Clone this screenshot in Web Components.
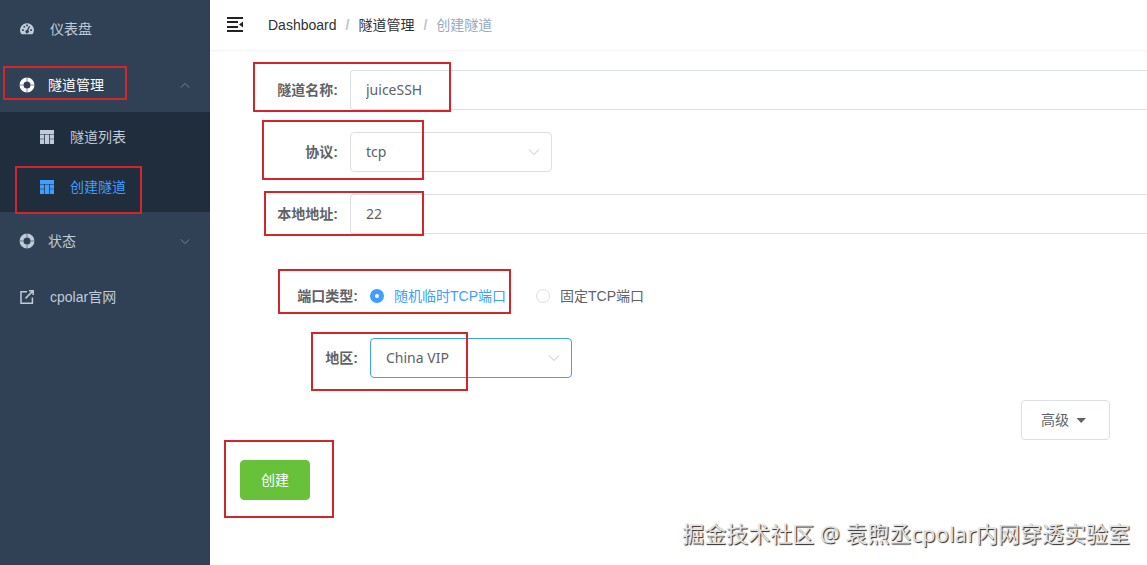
<!DOCTYPE html>
<html lang="zh-CN">
<head>
<meta charset="utf-8">
<title>创建隧道</title>
<style>
  body {
    margin: 0;
    background: #fff;
    color: #606266;
    font: 14px/20px "Liberation Sans", "Noto Sans CJK SC", sans-serif;
  }
</style>
</head>
<body>
<app-layout>
  <side-menu slot="side">
    <menu-item icon="gauge">仪表盘</menu-item>
    <menu-item icon="ring" arrow="up" current>隧道管理
      <mark-frame slot="mark" style="--top:10px;--left:3px;--width:124px;--height:34px"></mark-frame>
    </menu-item>
    <sub-menu>
      <menu-item icon="grid" nested>隧道列表</menu-item>
      <menu-item icon="grid" nested active>创建隧道
        <mark-frame slot="mark" style="--top:4px;--left:15px;--width:127px;--height:48px"></mark-frame>
      </menu-item>
    </sub-menu>
    <menu-item icon="ring" arrow="down">状态</menu-item>
    <menu-item icon="link">cpolar官网</menu-item>
  </side-menu>
  <nav-bar slot="top"></nav-bar>
  <tunnel-form>
    <text-field label="隧道名称:" value="juiceSSH">
      <mark-frame style="--top:-8px;--left:23px;--width:198px;--height:50px"></mark-frame>
    </text-field>
    <select-field label="协议:" options="tcp,http,tls">
      <mark-frame style="--top:-12px;--left:32px;--width:162px;--height:60px"></mark-frame>
    </select-field>
    <text-field label="本地地址:" value="22">
      <mark-frame style="--top:-3px;--left:34px;--width:160px;--height:45px"></mark-frame>
    </text-field>
    <field-group>
      <radio-field label="端口类型:" options="随机临时TCP端口,固定TCP端口">
        <mark-frame style="--top:-7px;--left:28px;--width:233px;--height:45px"></mark-frame>
      </radio-field>
      <select-field label="地区:" options="China VIP,China,United States" focused>
        <mark-frame style="--top:-6px;--left:61px;--width:157px;--height:59px"></mark-frame>
      </select-field>
    </field-group>
    <action-button slot="more" kind="plain" caret>高级</action-button>
    <action-button slot="submit" kind="success">创建
      <mark-frame slot="mark" style="--top:-20px;--left:-16px;--width:110px;--height:78px"></mark-frame>
    </action-button>
  </tunnel-form>
  <water-mark slot="overlay">掘金技术社区 @ 袁煦丞cpolar内网穿透实验室</water-mark>
</app-layout>

<script>
const define = (name, render) =>
  customElements.define(name, class extends HTMLElement {
    connectedCallback() {
      if (this.shadowRoot) return;
      this.attachShadow({ mode: 'open' }).innerHTML = render(this);
    }
  });

const icons = {
  gauge: `<svg viewBox="0 0 14 14"><path fill="currentColor" fill-rule="evenodd" d="M7 1.2a7 7 0 0 0-5.9 10.6c.2.3.4.4.7.4h10.4c.3 0 .5-.1.7-.4A7 7 0 0 0 7 1.2zM2.1 7.2h1.7v1.7H2.1zM3.5 4h1.6v1.6H3.5zM6.2 2.6h1.6v1.7H6.2zM10.2 7.2h1.7v1.7h-1.7zM9 3.9l1.1.5-1.8 3.9a1.7 1.7 0 1 1-1.4-.4z"/></svg>`,
  ring: `<svg viewBox="0 0 14 14"><circle cx="7" cy="7" r="5.5" fill="none" stroke="currentColor" stroke-width="4"/><path d="M7-1v4.5M7 10.5V15M-1 7h4.5M10.5 7H15" stroke="#304156" stroke-width="1" stroke-opacity=".6"/></svg>`,
  grid: `<svg viewBox="0 0 14 14"><path fill="currentColor" d="M0 0h14v4H0zM0 4.6h4.3v4.1H0zM5 4.6h4v9.4H5zM9.7 4.6H14v4.1H9.7zM0 9.3h4.3V14H0zM9.7 9.3H14V14H9.7z"/></svg>`,
  link: `<svg viewBox="0 0 14 14" fill="none" stroke="currentColor" stroke-width="1.5"><path d="M7 1.7H1v11.5h11.4V7.6M5.5 8.4l7-7M9 .8h4.2V5"/></svg>`
};
const chevron = `<svg class="chevron" viewBox="0 0 12 8" width="12" height="8" fill="none" stroke="currentColor"><path d="M1 1.5l5 5 5-5"/></svg>`;

define('app-layout', () => `<style>
  :host { display: flex; position: relative; min-height: 100vh; overflow: hidden; }
  aside { flex: 0 0 210px; background: #304156; }
  .page { flex: 1; min-width: 0; }
</style>
<aside><slot name="side"></slot></aside>
<div class="page"><slot name="top"></slot><main><slot></slot></main></div>
<slot name="overlay"></slot>`);

define('side-menu', () => `<style>
  :host { display: block; color: #bfcbd9; }
</style><nav><slot></slot></nav>`);

define('sub-menu', () => `<style>
  :host { display: block; background: #1f2d3d; }
</style><slot></slot>`);

define('menu-item', el => `<style>
  :host { display: block; position: relative; }
  :host([current]) { color: #fff; }
  :host([active]) { color: #409eff; }
  a { display: flex; align-items: center; gap: 16px; height: 56px; padding: 2px 20px 0;
      box-sizing: border-box; color: inherit; text-decoration: none; }
  :host([nested]) a { height: 50px; padding: 0 20px 0 40px; }
  :host([icon="ring"]) a { gap: 14px; }
  .icon { width: 14px; height: 14px; }
  .icon svg { display: block; width: 100%; height: 100%; overflow: visible; }
  .text { flex: 1; }
  .chevron { width: 10px; height: 7px; color: #8391a3; }
  :host([arrow="up"]) .chevron { transform: rotate(180deg); }
</style>
<a href="#"><span class="icon">${icons[el.getAttribute('icon')]}</span>
<span class="text"><slot></slot></span>${el.hasAttribute('arrow') ? chevron : ''}</a><slot name="mark"></slot>`);

define('mark-frame', () => `<style>
  :host { position: absolute; top: var(--top); left: var(--left); width: var(--width); height: var(--height);
          box-sizing: border-box; border: 2px solid #d2262c; pointer-events: none; z-index: 1; }
</style>`);

define('nav-bar', () => `<style>
  :host { display: flex; align-items: center; height: 50px; box-shadow: 0 1px 2px rgba(0,21,41,.06); }
  button { display: flex; margin: 0; padding: 0 17px; border: 0; background: none; color: #222; }
  ol { display: flex; margin: 0 8px; padding: 0; list-style: none; }
  li + li::before { content: "/"; margin: 0 9px; color: #c0c4cc; font-weight: 700; }
  a { color: #303133; text-decoration: none; }
  [aria-current] { color: #97a8be; }
</style>
<button type="button" aria-label="折叠菜单"><svg width="16" height="16" viewBox="0 0 16 16" fill="currentColor"><path d="M0 0h16v2H0zM0 4h11v2H0zM0 9h11v2H0zM0 13h16v2H0zM16 4.5v6l-4-3z"/></svg></button>
<nav aria-label="路径"><ol><li><a href="#">Dashboard</a></li><li><a href="#">隧道管理</a></li><li><span aria-current="page">创建隧道</span></li></ol></nav>`);

define('tunnel-form', () => `<style>
  :host { display: block; padding: 20px 0 20px 20px; }
  .fields { display: grid; gap: 22px; }
  .more { display: flex; justify-content: flex-end; margin: 22px 37px 20px 0; }
  .submit { display: flex; padding-left: 10px; }
</style>
<form><div class="fields"><slot></slot></div>
<div class="more"><slot name="more"></slot></div>
<div class="submit"><slot name="submit"></slot></div></form>`);

define('field-group', () => `<style>
  :host { display: grid; gap: 22px; padding: 20px 0 0 20px; }
</style><slot></slot>`);

const fieldStyle = `
  :host { display: flex; position: relative; align-items: center; min-height: 40px; }
  .label { flex: 0 0 120px; box-sizing: border-box; padding-right: 12px; text-align: right; font-weight: 700; }
  input[type=text], select { box-sizing: border-box; height: 40px; margin: 0; padding: 0 15px;
    border: 1px solid #dcdfe6; border-radius: 4px; background: #fff; color: #606266; outline: 0;
    font: 14px/20px "Noto Sans", "Noto Sans CJK SC", sans-serif; }`;

define('text-field', el => `<style>${fieldStyle}
  input[type=text] { flex: 1; min-width: 0; padding-bottom: 2px; border-right: 0; border-radius: 4px 0 0 4px; }
</style>
<label class="label" for="control">${el.getAttribute('label')}</label>
<input type="text" id="control" value="${el.getAttribute('value')}"><slot></slot>`);

define('select-field', el => `<style>${fieldStyle}
  .box { display: grid; align-items: center; width: 202px; }
  .box > * { grid-area: 1 / 1; }
  select { width: 100%; appearance: none; }
  :host([focused]) select { border-color: #409eff; }
  .chevron { justify-self: end; margin-right: 12px; color: #c0c4cc; pointer-events: none; }
</style>
<label class="label" for="control">${el.getAttribute('label')}</label>
<span class="box"><select id="control">${el.getAttribute('options').split(',').map(o => `<option>${o}</option>`).join('')}</select>${chevron}</span><slot></slot>`);

define('radio-field', el => `<style>${fieldStyle}
  .choices { display: flex; gap: 30px; }
  .choice { display: flex; align-items: center; gap: 10px; }
  input { appearance: none; box-sizing: border-box; width: 14px; height: 14px; margin: 0;
    border: 1px solid #dcdfe6; border-radius: 50%; background: #fff; }
  input:checked { border: 5px solid #409eff; }
  input:checked + span { color: #409eff; }
</style>
<span class="label" id="name">${el.getAttribute('label')}</span>
<div class="choices" role="radiogroup" aria-labelledby="name">${el.getAttribute('options').split(',').map((o, i) =>
  `<label class="choice"><input type="radio" name="choice"${i ? '' : ' checked'}><span>${o}</span></label>`).join('')}</div><slot></slot>`);

define('action-button', el => `<style>
  :host { display: block; position: relative; }
  button { display: flex; align-items: center; gap: 5px; height: 40px; margin: 0; padding: 0 20px;
    border: 1px solid #dcdfe6; border-radius: 4px; background: #fff; color: #606266; font: inherit; }
  :host([kind="plain"]) button { padding: 0 20px 0 19px; }
  :host([kind="success"]) button { border-color: #67c23a; background: #67c23a; color: #fff; }
</style>
<button type="button"><span><slot></slot></span>${el.hasAttribute('caret')
  ? '<svg width="15" height="14" viewBox="0 0 15 14"><path fill="currentColor" d="M2.5 5h9.5L7.2 10z"/></svg>' : ''}</button><slot name="mark"></slot>`);

define('water-mark', () => `<style>
  :host { position: absolute; right: 17px; bottom: 16px; color: #e2e2e2; white-space: nowrap; pointer-events: none;
    font: 22px/32px "Noto Sans", "Noto Sans CJK SC", sans-serif; text-shadow: 1px 1px 1px #222; }
</style><slot></slot>`);
</script>
</body>
</html>
